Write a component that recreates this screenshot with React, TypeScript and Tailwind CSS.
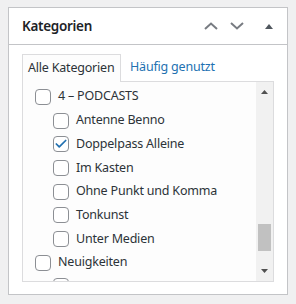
import { Check } from "lucide-react";

const items = [
  { label: "4 – PODCASTS", child: false, checked: false },
  { label: "Antenne Benno", child: true, checked: false },
  { label: "Doppelpass Alleine", child: true, checked: true },
  { label: "Im Kasten", child: true, checked: false },
  { label: "Ohne Punkt und Komma", child: true, checked: false },
  { label: "Tonkunst", child: true, checked: false },
  { label: "Unter Medien", child: true, checked: false },
  { label: "Neuigkeiten", child: false, checked: false },
  { label: "", child: true, checked: false },
];

function Box({ checked }: { checked: boolean }) {
  return (
    <span className="w-4 h-4 shrink-0 rounded-[4px] border border-[#8c8f94] bg-white flex items-center justify-center">
      {checked && <Check className="w-[14px] h-[14px] text-[#2271b1]" strokeWidth={3} />}
    </span>
  );
}

export default function App() {
  return (
    <div
      className="w-[296px] h-[304px] bg-[#f0f0f1] pt-[7px] pl-2"
      style={{ fontFamily: '"Noto Sans", "Open Sans", sans-serif' }}
    >
      <div className="w-[280px] h-[288px] bg-white border border-[#c3c4c7] flex flex-col">
        {/* Header */}
        <div className="h-[37px] shrink-0 border-b border-[#c3c4c7] flex items-center pl-[13px] pr-[14px]">
          <h2 className="text-[13.5px] tracking-[-0.3px] font-semibold text-[#1d2327] flex-1">Kategorien</h2>
          <svg width="14" height="8" viewBox="0 0 14 8" className="mr-3" fill="none">
            <path d="M1 7L7 1.5L13 7" stroke="#787c82" strokeWidth="2" />
          </svg>
          <svg width="14" height="8" viewBox="0 0 14 8" className="mr-[21px]" fill="none">
            <path d="M1 1L7 6.5L13 1" stroke="#787c82" strokeWidth="2" />
          </svg>
          <svg width="8" height="5" viewBox="0 0 8 5">
            <path d="M0 5L4 0L8 5Z" fill="#50575e" />
          </svg>
        </div>

        {/* Body */}
        <div className="px-[13px] pt-[8px]">
          <div className="flex items-end text-[12.5px] tracking-[-0.2px]">
            <div className="h-[28px] w-[99px] pl-[5px] border border-b-0 border-[#dcdcde] bg-[#fdfdfd] text-[#2c3338] flex items-center -mb-px relative z-10">
              Alle Kategorien
            </div>
            <div className="h-[28px] pl-[9px] text-[#2271b1] flex items-center">Häufig genutzt</div>
          </div>
          <div className="h-[201px] border border-[#dcdcde] bg-[#fdfdfd] flex overflow-hidden">
            <ul className="flex-1 pl-[12px] pt-[3px] text-[12.5px] tracking-[-0.2px] text-[#2c3338]">
              {items.map((it, i) => (
                <li key={i} className={`h-[23.7px] flex items-center gap-[7px] ${it.child ? "pl-[18px]" : ""}`}>
                  <Box checked={it.checked} />
                  <span>{it.label}</span>
                </li>
              ))}
            </ul>
            <div className="w-[17px] shrink-0 bg-[#f1f1f1] flex flex-col items-center justify-between py-[8px] relative">
              <svg width="7" height="4" viewBox="0 0 7 4">
                <path d="M0 4L3.5 0L7 4Z" fill="#505050" />
              </svg>
              <svg width="7" height="4" viewBox="0 0 7 4">
                <path d="M0 0L3.5 4L7 0Z" fill="#505050" />
              </svg>
              <div className="absolute left-[2px] top-[142px] w-[13px] h-[27px] bg-[#c1c1c1]" />
            </div>
          </div>
        </div>
      </div>
    </div>
  );
}
